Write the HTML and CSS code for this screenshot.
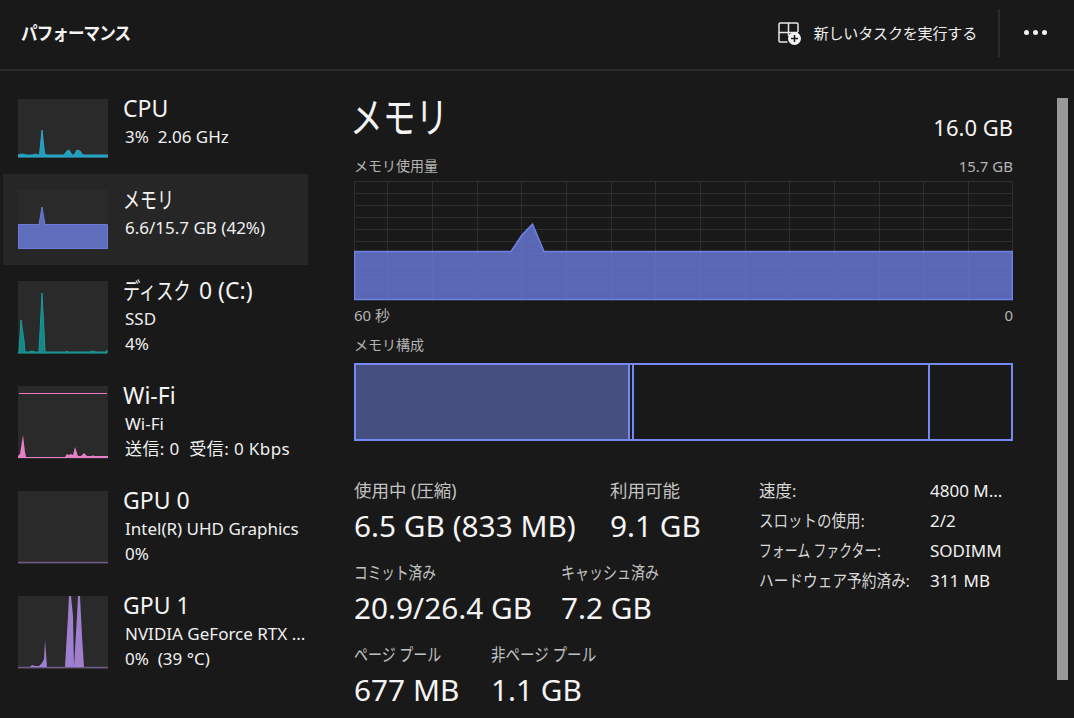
FILE: index.html
```html
<!DOCTYPE html>
<html lang="ja">
<head>
<meta charset="utf-8">
<title>パフォーマンス</title>
<link rel="stylesheet" href="styles.css">
</head>
<body>
<div class="app">
  <header class="topbar">
    <h1 class="page-title"><span class="cond sx92">パフォーマンス</span></h1>
    <div class="actions">
      <button class="run-task">
        <svg class="run-icon" width="24" height="24" viewBox="0 0 24 24" fill="none">
          <path d="M9.500 20H2.200C1.500 20 1 19.500 1 18.800V2.200C1 1.500 1.500 1 2.200 1H18.800C19.500 1 20 1.500 20 2.200V10M10.500 1V14M1 10.500H20" stroke="#e8e8e8" stroke-width="1.500"/>
          <circle cx="16.500" cy="16.500" r="6.500" fill="#f4f4f4"/>
          <path d="M16.500 13V20M13 16.500H20" stroke="#1a1a1a" stroke-width="1.500"/>
        </svg>
        <span>新しいタスクを実行する</span>
      </button>
      <span class="divider"></span>
      <span class="more"><i></i><i></i><i></i></span>
    </div>
  </header>
  <div class="body">
    <nav class="sidebar">
      <div class="item short">
        <svg class="thumb" width="90" height="59" viewBox="0 0 90 59"><path d="M0 58V56L4 55L8 56L15 56L17 55L20 56H21.500L24 31L26.500 54L28 56H46L49 52L51 51L54 56L56 56L59 51L62 52L65 56H90V58Z" fill="#1f9fbf" stroke="#2aa6c4"/></svg>
        <div class="info"><div class="name">CPU</div><div class="sub">3%&nbsp; 2.06 GHz</div></div>
      </div>
      <div class="item short selected">
        <svg class="thumb" width="90" height="59" viewBox="0 0 90 59"><path d="M0.500 58.500V34.500L21 34.500L24 17L27 34.500H89.500V58.500Z" fill="#5f6dbd" stroke="#6a7ad6"/></svg>
        <div class="info"><div class="name"><span class="cond sx74">メモリ</span></div><div class="sub">6.6/15.7 GB (42%)</div></div>
      </div>
      <div class="item">
        <svg class="thumb tall" width="90" height="73" viewBox="0 0 90 73"><path d="M0 72V71H1L3 39L6 60L7 71H11L14 70L17 71H21L24 12L26 50L27 71H48L49 70L50 71H72L74 70L78 71H88L89 69V72Z" fill="#13888a" stroke="#1b9a9a"/></svg>
        <div class="info"><div class="name"><span class="cond sx75 disk">ディスク</span> 0 (C:)</div><div class="sub">SSD</div><div class="sub">4%</div></div>
      </div>
      <div class="item">
        <svg class="thumb tall" width="90" height="73" viewBox="0 0 90 73"><path d="M1 7.500H89" stroke="#e878c4" fill="none"/><path d="M0 72V70L2 68L5 49L7 66L8 71H47L49 68L51 69L53 68L55 69L57 61L60 70H63L66 67L69 70H74L75 69L76 70H90V72Z" fill="#e67fc5"/></svg>
        <div class="info"><div class="name">Wi-Fi</div><div class="sub">Wi-Fi</div><div class="sub wide">送信: 0&nbsp; 受信: 0 Kbps</div></div>
      </div>
      <div class="item">
        <svg class="thumb tall" width="90" height="73" viewBox="0 0 90 73"><path d="M0 71.500H90" stroke="#6e5a86" stroke-width="1.500"/></svg>
        <div class="info"><div class="name">GPU 0</div><div class="sub">Intel(R) UHD Graphics</div><div class="sub">0%</div></div>
      </div>
      <div class="item">
        <svg class="thumb tall" width="90" height="73" viewBox="0 0 90 73"><path d="M0 71.500H90" stroke="#6e5a86" stroke-width="1.500"/><path d="M12 71L14 69L17 70H21L24 67L26 63L27 44L29 71ZM47 71L50 20L51 0H53L55 20L56 71ZM56 71L59 20L60 0H62L64 40L66 71Z" fill="#a17fd0"/></svg>
        <div class="info"><div class="name">GPU 1</div><div class="sub">NVIDIA GeForce RTX ...</div><div class="sub">0%&nbsp; (39 °C)</div></div>
      </div>
    </nav>
    <main class="main">
      <div class="title-row"><h2 class="mem-title"><span class="cond sx78">メモリ</span></h2><span class="capacity">16.0 GB</span></div>
      <div class="caption-row"><span>メモリ使用量</span><span class="num">15.7 GB</span></div>
      <svg class="graph" width="659" height="120" viewBox="0 0 659 120">
        <g stroke="#2e2e2e" fill="none">
          <path d="M0 .5H659M0 12.500H659M0 24.500H659M0 36.500H659M0 48.500H659M0 60.500H659M0 72.500H659M0 84.500H659M0 96.500H659M0 108.500H659"/>
          <path d="M.5 0V120M33.500 0V120M78.500 0V120M123.500 0V120M167.500 0V120M212.500 0V120M257.500 0V120M301.500 0V120M346.500 0V120M391.500 0V120M435.500 0V120M480.500 0V120M525.500 0V120M569.500 0V120M614.500 0V120M658.500 0V120"/>
        </g>
        <path d="M.5 118.500V70.500H157L168 54L178.500 43L190 70.500H658.500V118.500Z" fill="#6676d0" fill-opacity=".85" stroke="#6f82e6" stroke-width="1.500"/>
      </svg>
      <div class="scale-row"><span>60 秒</span><span>0</span></div>
      <div class="caption-row comp-caption"><span>メモリ構成</span></div>
      <div class="composition">
        <div class="seg used"></div><div class="seg modified"></div><div class="seg standby"></div><div class="seg free"></div>
      </div>
      <div class="stats">
        <div class="stats-left">
          <div class="stat-row">
            <div class="stat w-used"><div class="label">使用中 (圧縮)</div><div class="value">6.5 GB (833 MB)</div></div>
            <div class="stat"><div class="label">利用可能</div><div class="value">9.1 GB</div></div>
          </div>
          <div class="stat-row">
            <div class="stat w-commit"><div class="label"><span class="cond sx78">コミット済み</span></div><div class="value">20.9/26.4 GB</div></div>
            <div class="stat"><div class="label"><span class="cond sx80">キャッシュ済み</span></div><div class="value">7.2 GB</div></div>
          </div>
          <div class="stat-row">
            <div class="stat w-page"><div class="label"><span class="cond sx80">ページ プール</span></div><div class="value">677 MB</div></div>
            <div class="stat"><div class="label"><span class="cond sx83">非ページ プール</span></div><div class="value">1.1 GB</div></div>
          </div>
        </div>
        <dl class="specs">
          <dt>速度:</dt><dd>4800 M...</dd>
          <dt><span class="cond sx88">スロットの使用:</span></dt><dd>2/2</dd>
          <dt><span class="cond sx78">フォーム ファクター:</span></dt><dd>SODIMM</dd>
          <dt><span class="cond sx89">ハードウェア予約済み:</span></dt><dd>311 MB</dd>
        </dl>
      </div>
    </main>
    <div class="scrollbar"></div>
  </div>
</div>
</body>
</html>
```
FILE: styles.css
```css
* { box-sizing: border-box; }
html, body { margin: 0; height: 100%; overflow: hidden; }
body {
  background: #191919;
  color: #f4f4f4;
  font-family: "Noto Sans", "Noto Sans CJK JP", sans-serif;
}
.app { width: 1074px; height: 718px; display: flex; flex-direction: column; overflow: hidden; }

/* Japanese UI face has narrow kana: squeeze the wider CJK face horizontally */
.cond { display: inline-block; transform-origin: left center; white-space: nowrap; }
.sx74 { transform: scaleX(.74); }
.sx75 { transform: scaleX(.75); }
.sx78 { transform: scaleX(.78); }
.sx80 { transform: scaleX(.8); }
.sx83 { transform: scaleX(.83); }
.sx88 { transform: scaleX(.88); }
.sx89 { transform: scaleX(.89); }
.sx92 { transform: scaleX(.92); }

.topbar {
  height: 71px;
  flex: none;
  display: flex;
  align-items: center;
  justify-content: space-between;
  padding: 0 24px 4px 21px;
  border-bottom: 2px solid #2b2b2b;
}
.page-title { margin: 0; font-size: 18px; font-weight: 700; line-height: 24px; letter-spacing: -1px; }
.actions { display: flex; align-items: center; height: 48px; }
.run-task {
  display: flex; align-items: center; gap: 12px;
  background: none; border: 0; padding: 0; color: #f0f0f0;
  font: inherit; font-size: 15px; letter-spacing: -.15px;
}
.run-icon { display: block; margin-top: 3px; }
.divider { width: 2px; height: 48px; background: #2b2b2b; margin-left: 21px; margin-right: 24px; }
.more { display: flex; gap: 4px; width: 26px; }
.more i { width: 5px; height: 5px; border-radius: 50%; background: #f2f2f2; }

.body { flex: 1; display: flex; min-height: 0; }

.sidebar { width: 305px; flex: none; margin-left: 3px; padding-top: 12px; }
.item { height: 105px; display: flex; padding: 16px 0 0 15px; }
.item.short { height: 91px; }
.item.selected { background: #262626; }
.thumb { display: block; background: #2a2a2a; flex: none; }
.info { margin-left: 15px; min-width: 0; margin-top: -6px; }
.name { font-size: 23px; line-height: 31px; white-space: nowrap; }
.disk { width: 70px; }
.sub { font-size: 17px; line-height: 25px; margin-left: 2px; white-space: nowrap; color: #f0f0f0; }
.wide { letter-spacing: .4px; }

.main { width: 659px; flex: none; margin-left: 46px; padding-top: 23px; }
.title-row { display: flex; justify-content: space-between; align-items: flex-end; height: 45px; }
.mem-title { margin: 0 0 -4px -4px; font-size: 42px; font-weight: 400; line-height: 52px; }
.capacity { font-size: 22px; line-height: 28px; margin-bottom: -2px; }
.caption-row {
  display: flex; justify-content: space-between;
  font-size: 14px; line-height: 20px; color: #b4b4b4; margin-top: 17px;
}
.num { font-size: 15px; }
.graph { display: block; margin-top: 5px; }
.scale-row { display: flex; justify-content: space-between; font-size: 15px; line-height: 20px; color: #b4b4b4; margin-top: 4px; }
.comp-caption { margin-top: 10px; }
.composition {
  display: flex; height: 78px; margin-top: 8px; width: 659px;
  border: 2px solid #7688f5;
}
.seg { height: 100%; border-right: 2px solid #7688f5; }
.used { width: 274px; background: #444f80; }
.modified { width: 4px; }
.standby { width: 296px; }
.free { flex: 1; border-right: 0; }

.stats { display: flex; margin-top: 37px; }
.stats-left { width: 405px; flex: none; }
.stat-row { display: flex; height: 82px; }
.label { font-size: 17.500px; line-height: 24px; color: #c2c2c2; white-space: nowrap; }
.value { font-size: 29.800px; line-height: 40px; margin-top: 4px; white-space: nowrap; }
.w-used { width: 256px; }
.w-commit { width: 207px; }
.w-page { width: 137px; }
.specs {
  margin: 1px 0 0; display: grid; grid-template-columns: 171px auto; grid-auto-rows: 30px;
  font-size: 16.500px; line-height: 24px; color: #d8d8d8; align-content: start;
}
.specs dt, .specs dd { margin: 0; white-space: nowrap; }
.specs dd { color: #f0f0f0; font-size: 17px; }

.scrollbar { width: 11px; height: 582px; margin: 27px 0 0 44px; background: #999; flex: none; }
```
